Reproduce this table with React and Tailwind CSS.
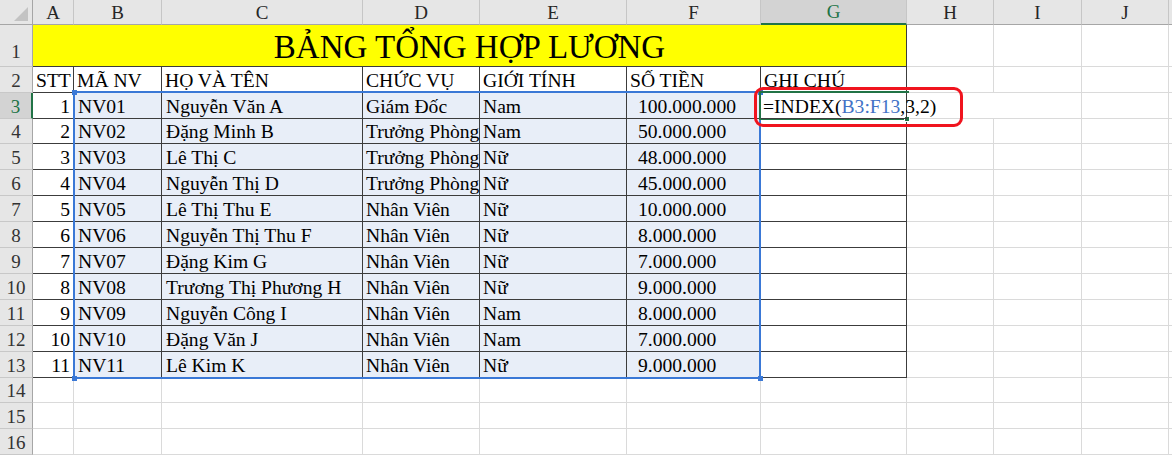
import React from "react";

const COLS = ["A", "B", "C", "D", "E", "F", "G", "H", "I", "J", ""];

const DATA = [
  [1, "NV01", "Nguyễn Văn A", "Giám Đốc", "Nam", "100.000.000"],
  [2, "NV02", "Đặng Minh B", "Trưởng Phòng", "Nam", "50.000.000"],
  [3, "NV03", "Lê Thị C", "Trưởng Phòng", "Nữ", "48.000.000"],
  [4, "NV04", "Nguyễn Thị D", "Trưởng Phòng", "Nữ", "45.000.000"],
  [5, "NV05", "Lê Thị Thu E", "Nhân Viên", "Nữ", "10.000.000"],
  [6, "NV06", "Nguyễn Thị Thu F", "Nhân Viên", "Nữ", "8.000.000"],
  [7, "NV07", "Đặng Kim G", "Nhân Viên", "Nữ", "7.000.000"],
  [8, "NV08", "Trương Thị Phương H", "Nhân Viên", "Nữ", "9.000.000"],
  [9, "NV09", "Nguyễn Công I", "Nhân Viên", "Nam", "8.000.000"],
  [10, "NV10", "Đặng Văn J", "Nhân Viên", "Nam", "7.000.000"],
  [11, "NV11", "Lê Kim K", "Nhân Viên", "Nữ", "9.000.000"],
];

const grid = "border-r border-b border-[#dadada]";
const tbl = "border-r border-b border-[#3c3c3c] flex items-end whitespace-nowrap leading-[22px] text-[19.6px]";
const sel = "bg-[#e8eef8]";

function RowHeader({ n, active, pb = "" }) {
  return (
    <div
      className={
        "flex items-end justify-center leading-[22px] border-b border-b-[#c8c8c8] " +
        pb +
        (active
          ? " bg-[#d3d3d3] text-[#217346] border-r-2 border-r-[#217346]"
          : " bg-[#e6e6e6] text-[#333333] border-r border-r-[#a6a6a6]")
      }
    >
      {n}
    </div>
  );
}

function EmptyRight() {
  return (
    <>
      <div className={grid} />
      <div className={grid} />
      <div className={grid} />
      <div className="border-b border-[#dadada]" />
    </>
  );
}

export default function App() {
  return (
    <div className="relative w-[1172px] h-[455px] overflow-hidden bg-white text-[19px] text-black font-['Liberation_Serif','Times_New_Roman',serif]">
      <div className="grid grid-cols-[33px_41px_88px_201px_117px_147px_134px_146px_87px_88px_87px_3px] grid-rows-[25px_42px_26px_26px_25px_26px_26px_26px_26px_26px_26px_26px_26px_26px_25px_26px_26px]">
        {/* corner */}
        <div className="bg-[#e6e6e6] border-r border-b border-r-[#a6a6a6] border-b-[#a6a6a6] flex items-end justify-end pr-[4px] pb-[3px]">
          <svg width="14" height="14" viewBox="0 0 14 14">
            <polygon points="14,0 14,14 0,14" fill="#c3c3c3" />
          </svg>
        </div>
        {COLS.map((c, i) =>
          c === "G" ? (
            <div
              key={i}
              className="bg-[#d3d3d3] text-[#217346] border-r border-r-[#c6c6c6] border-b-2 border-b-[#217346] flex items-end justify-center leading-[22px]"
            >
              {c}
            </div>
          ) : (
            <div
              key={i}
              className={
                "bg-[#e6e6e6] text-[#262626] border-b border-b-[#a6a6a6] flex items-end justify-center leading-[22px] " +
                (i < COLS.length - 1 ? "border-r border-r-[#c6c6c6]" : "")
              }
            >
              {c}
            </div>
          )
        )}

        {/* Row 1 */}
        <RowHeader n={1} pb="pb-[3px]" />
        <div className="col-span-7 bg-[#ffff00] border-r border-b border-[#3c3c3c] flex items-end justify-center text-[33px] leading-[36px] pb-[1px] whitespace-nowrap">
          BẢNG TỔNG HỢP LƯƠNG
        </div>
        <EmptyRight />

        {/* Row 2 */}
        <RowHeader n={2} />
        {["STT", "MÃ NV", "HỌ VÀ TÊN", "CHỨC VỤ", "GIỚI TÍNH", "SỐ TIỀN", "GHI CHÚ"].map((h, i) => (
          <div key={i} className={tbl + " pl-[3px]"}>
            {h}
          </div>
        ))}
        <EmptyRight />

        {/* Data rows */}
        {DATA.map((r, ri) => (
          <React.Fragment key={ri}>
            <RowHeader n={ri + 3} active={ri === 0} />
            <div className={tbl + " justify-end pr-[3px]"}>{r[0]}</div>
            <div className={tbl + " pl-[4px] " + sel}>{r[1]}</div>
            <div className={tbl + " pl-[4px] " + sel}>{r[2]}</div>
            <div className={tbl + " pl-[3px] " + sel}>{r[3]}</div>
            <div className={tbl + " pl-[3px] " + sel}>{r[4]}</div>
            <div className={tbl + " pl-[11px] " + sel}>{r[5]}</div>
            {ri === 0 ? (
              <div className={tbl + " pl-[2px] relative z-10"}>
                <span>=INDEX(</span>
                <span className="text-[#4272c6]">B3:F13</span>
                <span>,3,2)</span>
                <span className="inline-block w-[1px] h-[20px] bg-black ml-[2px] mb-[3px]" />
              </div>
            ) : (
              <div className={tbl} />
            )}
            <div className={ri === 0 ? "border-b border-[#dadada]" : grid} />
            <div className={grid} />
            <div className={grid} />
            <div className="border-b border-[#dadada]" />
          </React.Fragment>
        ))}

        {/* Rows 14-16 */}
        {[14, 15, 16].map((n) => (
          <React.Fragment key={n}>
            <RowHeader n={n} />
            {Array.from({ length: 10 }).map((_, i) => (
              <div key={i} className={grid} />
            ))}
            <div className="border-b border-[#dadada]" />
          </React.Fragment>
        ))}
      </div>

      {/* Range highlight B3:F13 */}
      <div className="absolute left-[73px] top-[91px] w-[688px] h-[288px] border-2 border-[#3a78d6] pointer-events-none" />
      <div className="absolute left-[72px] top-[90px] w-[5px] h-[5px] bg-[#3a78d6]" />
      <div className="absolute left-[72px] top-[376px] w-[5px] h-[5px] bg-[#3a78d6]" />
      <div className="absolute left-[758px] top-[376px] w-[5px] h-[5px] bg-[#3a78d6]" />
      <div className="absolute left-[758px] top-[90px] w-[5px] h-[5px] bg-[#3a78d6]" />

      {/* Active cell G3 */}
      <div className="absolute left-[759px] top-[91px] w-[150px] h-[29px] border-2 border-r-0 border-[#217346] pointer-events-none" />
      <div className="absolute left-[904px] top-[116px] w-[6px] h-[6px] bg-[#217346] border border-white" />

      {/* Red annotation */}
      <div className="absolute left-[754px] top-[87px] w-[209px] h-[40px] border-[3px] border-[#f0141e] rounded-[9px] pointer-events-none" />
    </div>
  );
}
